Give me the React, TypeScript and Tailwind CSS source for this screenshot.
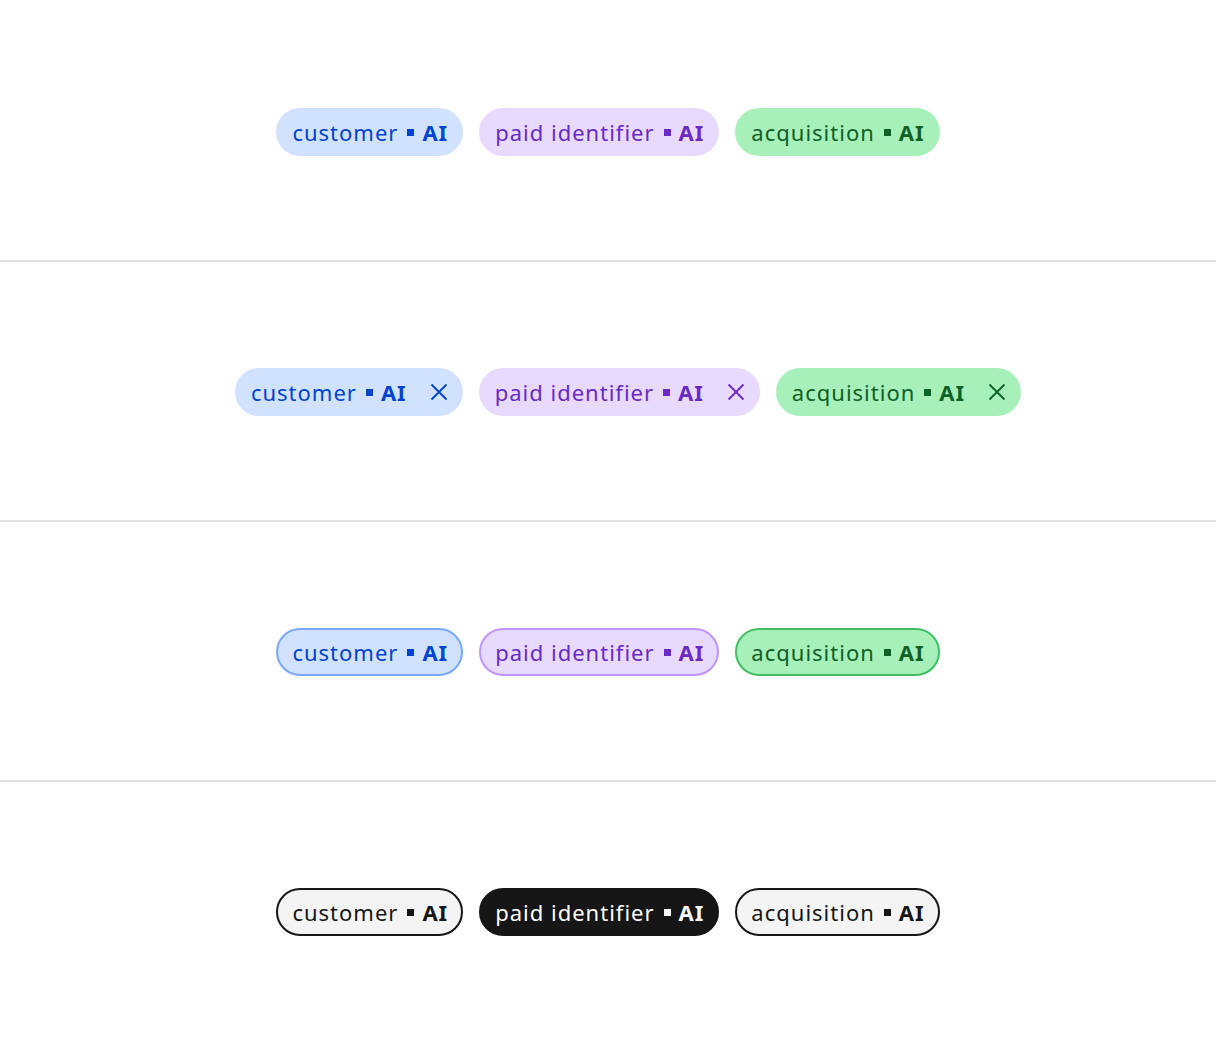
import React from "react";

type Variant = {
  bg: string;
  text: string;
  border: string;
  square: string;
};

const blue: Variant = { bg: "bg-[#d0e2ff]", text: "text-[#0043ce]", border: "border-[#78a9ff]", square: "bg-[#0043ce]" };
const purple: Variant = { bg: "bg-[#e8daff]", text: "text-[#6929c4]", border: "border-[#be95ff]", square: "bg-[#6929c4]" };
const green: Variant = { bg: "bg-[#a7f0ba]", text: "text-[#0e6027]", border: "border-[#42be65]", square: "bg-[#0e6027]" };

function Close() {
  return (
    <svg width="32" height="32" viewBox="0 0 32 32" fill="none" stroke="currentColor" strokeWidth="1.8" aria-hidden>
      <path d="M8.5 8.5L23.5 23.5M23.5 8.5L8.5 23.5" />
    </svg>
  );
}

function Label({ label, square }: { label: string; square: string }) {
  return (
    <>
      <span className="text-[22px] leading-none tracking-[1px] -mr-[1px]">{label}</span>
      <span className={`ml-[10px] mr-[8px] h-[7px] w-[7px] shrink-0 ${square}`} />
      <span className="text-[22px] font-bold leading-none tracking-[1px] -mr-[1px]">AI</span>
    </>
  );
}

function Tag({
  label,
  v,
  dismiss,
  outline,
}: {
  label: string;
  v: Variant;
  dismiss?: boolean;
  outline?: boolean;
}) {
  return (
    <div
      className={`flex h-[48px] items-center rounded-full ${v.bg} ${v.text} ${
        outline ? `border-2 ${v.border} pl-[14px] pr-[14px]` : dismiss ? "pl-[16px] pr-[8px]" : "pl-[16px] pr-[16px]"
      }`}
    >
      <Label label={label} square={v.square} />
      {dismiss && (
        <span className="ml-[17px] flex h-[32px] w-[32px] items-center justify-center">
          <Close />
        </span>
      )}
    </div>
  );
}

function Selectable({ label, selected }: { label: string; selected?: boolean }) {
  return (
    <div
      className={`flex h-[48px] items-center rounded-full border-2 border-[#161616] pl-[14px] pr-[14px] ${
        selected ? "bg-[#161616] text-white" : "bg-[#f4f4f4] text-[#161616]"
      }`}
    >
      <Label label={label} square={selected ? "bg-white" : "bg-[#161616]"} />
    </div>
  );
}

export default function App() {
  return (
    <div className="min-h-[1044px] bg-white" style={{ fontFamily: '"Noto Sans", "Liberation Sans", sans-serif' }}>
      <section className="flex h-[260px] items-start justify-center gap-[16px] pt-[108px]">
        <Tag label="customer" v={blue} />
        <Tag label="paid identifier" v={purple} />
        <Tag label="acquisition" v={green} />
      </section>
      <section className="flex h-[260px] items-start justify-center gap-[16px] border-t-2 border-[#e0e0e0] pl-[40px] pt-[106px]">
        <Tag label="customer" v={blue} dismiss />
        <Tag label="paid identifier" v={purple} dismiss />
        <Tag label="acquisition" v={green} dismiss />
      </section>
      <section className="flex h-[260px] items-start justify-center gap-[16px] border-t-2 border-[#e0e0e0] pt-[106px]">
        <Tag label="customer" v={blue} outline />
        <Tag label="paid identifier" v={purple} outline />
        <Tag label="acquisition" v={green} outline />
      </section>
      <section className="flex h-[264px] items-start justify-center gap-[16px] border-t-2 border-[#e0e0e0] pt-[106px]">
        <Selectable label="customer" />
        <Selectable label="paid identifier" selected />
        <Selectable label="acquisition" />
      </section>
    </div>
  );
}
